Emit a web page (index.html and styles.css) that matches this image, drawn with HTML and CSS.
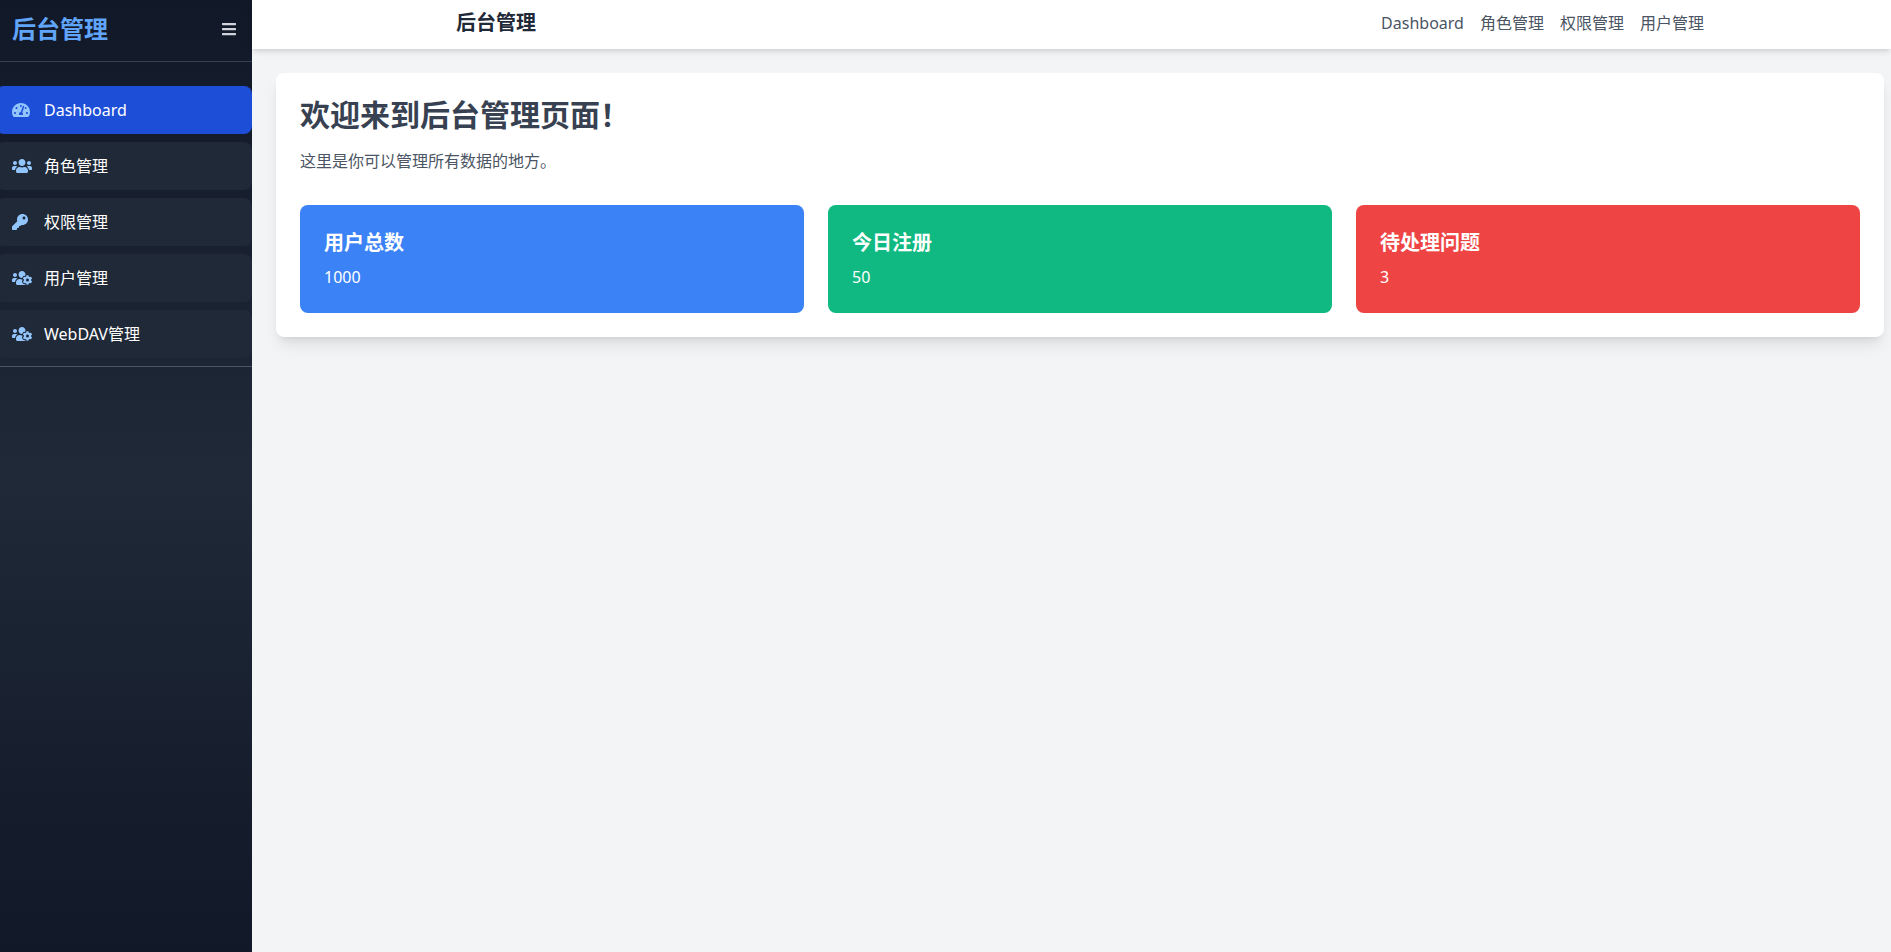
FILE: index.html
```
<!DOCTYPE html>
<html lang="zh-CN">
<head>
  <meta charset="UTF-8">
  <meta name="viewport" content="width=device-width, initial-scale=1.0">
  <title>后台管理</title>
  <link rel="stylesheet" href="styles.css">
</head>
<body>
  <!-- 图标 -->
  <svg class="icon-defs" aria-hidden="true">
    <symbol id="icon-users-cog" viewBox="0 0 640 512">
      <path d="M610.5 341.3c2.6-14.1 2.6-28.5 0-42.6l25.8-14.9c3-1.7 4.3-5.2 3.3-8.5-6.7-21.6-18.2-41.2-33.2-57.4-2.3-2.5-6-3.1-9-1.4l-25.8 14.9c-10.9-9.3-23.4-16.5-36.9-21.3v-29.8c0-3.4-2.4-6.4-5.7-7.1-22.3-5-45-4.8-66.2 0-3.3.7-5.7 3.7-5.7 7.1v29.8c-13.5 4.8-26 12-36.9 21.3l-25.8-14.9c-2.9-1.7-6.7-1.1-9 1.4-15 16.2-26.5 35.8-33.2 57.4-1 3.3.4 6.8 3.3 8.5l25.8 14.9c-2.6 14.1-2.6 28.5 0 42.6l-25.8 14.9c-3 1.7-4.3 5.2-3.3 8.5 6.7 21.6 18.2 41.1 33.2 57.4 2.3 2.5 6 3.1 9 1.4l25.8-14.9c10.9 9.3 23.4 16.5 36.9 21.3v29.8c0 3.4 2.4 6.4 5.7 7.1 22.3 5 45 4.8 66.2 0 3.3-.7 5.7-3.7 5.7-7.1v-29.8c13.5-4.8 26-12 36.9-21.3l25.8 14.9c2.9 1.7 6.7 1.1 9-1.4 15-16.2 26.5-35.8 33.2-57.4 1-3.3-.4-6.8-3.3-8.5l-25.8-14.9zM496 368.5c-26.8 0-48.5-21.8-48.5-48.5s21.8-48.5 48.5-48.5 48.5 21.8 48.5 48.5-21.7 48.5-48.5 48.5zM96 224c35.3 0 64-28.7 64-64s-28.7-64-64-64-64 28.7-64 64 28.7 64 64 64zm224 32c1.9 0 3.7-.5 5.6-.6 8.3-21.7 20.5-42.1 36.3-59.2 7.4-8 17.9-12.6 28.9-12.6 6.9 0 13.7 1.8 19.6 5.3l7.9 4.6c.8-.5 1.6-.9 2.4-1.4 7-14.6 11.2-30.8 11.2-48 0-61.9-50.1-112-112-112S208 82.1 208 144c0 61.9 50.1 112 112 112zm105.2 194.5c-2.3-1.2-4.6-2.6-6.8-3.9-8.2 4.8-15.3 9.8-27.5 9.8-10.9 0-21.4-4.6-28.9-12.6-18.3-19.8-32.3-43.9-40.2-69.6-10.7-34.5 24.9-49.7 25.8-50.3-.1-2.6-.1-5.2 0-7.8l-7.9-4.6c-3.8-2.2-7-5-9.8-8.1-3.3.2-6.5.6-9.8.6-24.6 0-47.6-6-68.5-16h-8.3C179.6 288 128 339.6 128 403.2V432c0 26.5 21.5 48 48 48h255.4c-3.7-6-6.2-12.8-6.2-20.3v-9.2zM173.1 274.6C161.5 263.1 145.6 256 128 256H64c-35.3 0-64 28.7-64 64v32c0 17.7 14.3 32 32 32h65.9c6.3-47.4 34.9-87.3 75.2-109.4z"/>
    </symbol>
  </svg>

  <div class="layout">
    <aside class="sidebar">
      <div class="sidebar-header">
        <h2 class="sidebar-title">后台管理</h2>
        <button class="sidebar-toggle" type="button" aria-label="切换菜单">
          <svg width="14" height="16" viewBox="0 0 448 512"><path d="M16 132h416c8.837 0 16-7.163 16-16V76c0-8.837-7.163-16-16-16H16C7.163 60 0 67.163 0 76v40c0 8.837 7.163 16 16 16zm0 160h416c8.837 0 16-7.163 16-16v-40c0-8.837-7.163-16-16-16H16c-8.837 0-16 7.163-16 16v40c0 8.837 7.163 16 16 16zm0 160h416c8.837 0 16-7.163 16-16v-40c0-8.837-7.163-16-16-16H16c-8.837 0-16 7.163-16 16v40c0 8.837 7.163 16 16 16z"/></svg>
        </button>
      </div>

      <nav class="menu">
        <a class="menu-item active" href="#">
          <span class="menu-icon"><svg width="18" height="16" viewBox="0 0 576 512"><path d="M288 32C128.94 32 0 160.94 0 320c0 52.8 14.25 102.26 39.06 144.8 5.61 9.62 16.3 15.2 27.44 15.2h443c11.14 0 21.83-5.58 27.44-15.2C561.75 422.26 576 372.8 576 320c0-159.06-128.94-288-288-288zm0 64c14.71 0 26.58 10.13 30.32 23.65-1.11 2.26-2.64 4.23-3.45 6.67l-9.22 27.67c-5.13 3.49-10.97 6.01-17.64 6.01-17.67 0-32-14.33-32-32S270.33 96 288 96zM96 384c-17.67 0-32-14.33-32-32s14.33-32 32-32 32 14.33 32 32-14.33 32-32 32zm48-160c-17.67 0-32-14.33-32-32s14.33-32 32-32 32 14.33 32 32-14.33 32-32 32zm246.77-72.41l-61.33 184C343.13 347.33 352 364.54 352 384c0 11.72-3.38 22.55-8.88 32H232.88c-5.5-9.45-8.88-20.28-8.88-32 0-33.94 26.5-61.43 59.9-63.59l61.34-184.01c4.17-12.56 17.73-19.45 30.36-15.17 12.57 4.19 19.35 17.79 15.17 30.36zm14.66 57.2l15.52-46.55c3.47-1.29 7.13-2.23 11.05-2.23 17.67 0 32 14.33 32 32s-14.33 32-32 32c-11.38-.01-20.89-6.28-26.57-15.22zM480 384c-17.67 0-32-14.33-32-32s14.33-32 32-32 32 14.33 32 32-14.33 32-32 32z"/></svg></span>
          <span>Dashboard</span>
        </a>
        <a class="menu-item" href="#">
          <span class="menu-icon"><svg width="20" height="16" viewBox="0 0 640 512"><path d="M96 224c35.3 0 64-28.7 64-64s-28.7-64-64-64-64 28.7-64 64 28.7 64 64 64zm448 0c35.3 0 64-28.7 64-64s-28.7-64-64-64-64 28.7-64 64 28.7 64 64 64zm32 32h-64c-17.6 0-33.5 7.1-45.1 18.6 40.3 22.1 68.9 62 75.1 109.4h66c17.7 0 32-14.3 32-32v-32c0-35.3-28.7-64-64-64zm-256 0c61.9 0 112-50.1 112-112S381.9 32 320 32 208 82.1 208 144s50.1 112 112 112zm76.8 32h-8.3c-20.8 10-43.9 16-68.5 16s-47.6-6-68.5-16h-8.3C179.6 288 128 339.6 128 403.2V432c0 26.5 21.5 48 48 48h288c26.5 0 48-21.5 48-48v-28.8c0-63.6-51.6-115.2-115.2-115.2zm-223.7-13.4C161.5 263.1 145.6 256 128 256H64c-35.3 0-64 28.7-64 64v32c0 17.7 14.3 32 32 32h65.9c6.3-47.4 34.9-87.3 75.2-109.4z"/></svg></span>
          <span>角色管理</span>
        </a>
        <a class="menu-item" href="#">
          <span class="menu-icon"><svg width="16" height="16" viewBox="0 0 512 512"><path d="M512 176.001C512 273.203 433.202 352 336 352c-11.22 0-22.19-1.062-32.827-3.069l-24.012 27.014A23.999 23.999 0 0 1 261.223 384H224v40c0 13.255-10.745 24-24 24h-40v40c0 13.255-10.745 24-24 24H24c-13.255 0-24-10.745-24-24v-78.059c0-6.365 2.529-12.47 7.029-16.971l161.802-161.802C163.108 213.814 160 195.271 160 176 160 78.798 238.797.001 335.999 0 433.488-.001 512 78.511 512 176.001zM336 128c0 26.51 21.49 48 48 48s48-21.49 48-48-21.49-48-48-48-48 21.49-48 48z"/></svg></span>
          <span>权限管理</span>
        </a>
        <a class="menu-item" href="#">
          <span class="menu-icon"><svg width="20" height="16"><use href="#icon-users-cog"/></svg></span>
          <span>用户管理</span>
        </a>
        <a class="menu-item" href="#">
          <span class="menu-icon"><svg width="20" height="16"><use href="#icon-users-cog"/></svg></span>
          <span>WebDAV管理</span>
        </a>
      </nav>
    </aside>

    <div class="main">
      <header class="topbar">
        <div class="topbar-inner">
          <h1 class="topbar-title">后台管理</h1>
          <nav class="topbar-nav">
            <a href="#">Dashboard</a>
            <a href="#">角色管理</a>
            <a href="#">权限管理</a>
            <a href="#">用户管理</a>
          </nav>
        </div>
      </header>

      <main class="content">
        <section class="panel">
          <h2 class="panel-title">欢迎来到后台管理页面！</h2>
          <p class="panel-text">这里是你可以管理所有数据的地方。</p>
          <div class="stats">
            <div class="stat stat-blue">
              <h3>用户总数</h3>
              <p>1000</p>
            </div>
            <div class="stat stat-green">
              <h3>今日注册</h3>
              <p>50</p>
            </div>
            <div class="stat stat-red">
              <h3>待处理问题</h3>
              <p>3</p>
            </div>
          </div>
        </section>
      </main>
    </div>
  </div>
</body>
</html>
```

FILE: styles.css
```
* {
  box-sizing: border-box;
  margin: 0;
  padding: 0;
}
body {
  font-family: "Noto Sans", "Noto Sans CJK SC", sans-serif;
  font-size: 16px;
  line-height: 24px;
  background: #f3f4f6;
}
a {
  color: inherit;
  text-decoration: none;
}
svg {
  display: block;
  fill: currentColor;
}
.icon-defs {
  display: none;
}
.layout {
  display: flex;
  min-height: 100vh;
}

/* 侧边栏 */
.sidebar {
  flex: 0 0 252px;
  background: linear-gradient(to bottom, #111827, #1f2937, #111827);
  color: #fff;
}
.sidebar-header {
  display: flex;
  align-items: center;
  justify-content: space-between;
  padding: 13px 16px 16px 12px;
  border-bottom: 1px solid #374151;
}
.sidebar-title {
  font-size: 24px;
  line-height: 32px;
  color: #60a5fa;
}
.sidebar-toggle {
  border: none;
  background: none;
  color: #d1d5db;
  cursor: pointer;
}
.menu {
  display: flex;
  flex-direction: column;
  gap: 8px;
  margin-top: 24px;
  margin-left: -4px;
  padding-bottom: 8px;
  border-bottom: 1px solid #4b5563;
}
.menu-item {
  display: flex;
  align-items: center;
  gap: 12px;
  padding: 12px 16px;
  border-radius: 8px;
  background: #1f2937;
}
.menu-item:hover {
  background: #374151;
}
.menu-item.active {
  background: #1d4ed8;
}
.menu-icon {
  width: 20px;
  color: #93c5fd;
}

/* 顶部导航 */
.main {
  flex: 1;
  min-width: 0;
}
.topbar {
  padding: 0 7px 0 24px;
  background: #fff;
  box-shadow: 0 4px 6px -1px rgba(0,0,0,0.1), 0 2px 4px -2px rgba(0,0,0,0.1);
}
.topbar-inner {
  display: flex;
  align-items: center;
  justify-content: space-between;
  max-width: 1280px;
  margin: 0 auto;
  padding: 9px 16px 12px;
}
.topbar-title {
  font-size: 20px;
  line-height: 28px;
  color: #1f2937;
}
.topbar-nav {
  display: flex;
  gap: 16px;
  color: #4b5563;
}
.topbar-nav a:hover {
  color: #3b82f6;
}

/* 内容区 */
.content {
  padding: 24px 7px 24px 24px;
}
.panel {
  padding: 24px;
  border-radius: 8px;
  background: #fff;
  box-shadow: 0 10px 15px -3px rgba(0,0,0,0.1), 0 4px 6px -4px rgba(0,0,0,0.1);
}
.panel-title {
  margin-bottom: 16px;
  font-size: 30px;
  line-height: 36px;
  color: #374151;
}
.panel-text {
  color: #4b5563;
}
.stats {
  display: grid;
  grid-template-columns: repeat(3, 1fr);
  gap: 24px;
  margin-top: 32px;
}
.stat {
  padding: 24px;
  border-radius: 8px;
  color: #fff;
}
.stat h3 {
  margin-bottom: 8px;
  font-size: 20px;
  line-height: 28px;
}
.stat-blue {
  background: #3b82f6;
}
.stat-green {
  background: #10b981;
}
.stat-red {
  background: #ef4444;
}
```
